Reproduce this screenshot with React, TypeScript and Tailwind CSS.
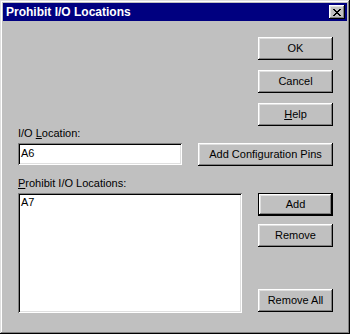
import React from 'react';

const raised =
  'bg-[#c0c0c0] shadow-[inset_-1px_-1px_#000,inset_1px_1px_#fff,inset_-2px_-2px_#808080,inset_2px_2px_#dfdfdf]';
const sunken =
  'bg-white shadow-[inset_1px_1px_#808080,inset_-1px_-1px_#fff,inset_2px_2px_#000,inset_-2px_-2px_#dfdfdf]';

function Btn({ children, isDefault, className = '' }: { children: React.ReactNode; isDefault?: boolean; className?: string }) {
  if (isDefault) {
    return (
      <div className={`w-[75px] h-[23px] border border-black ${className}`}>
        <div className={`w-full h-full flex items-center justify-center ${raised}`}>{children}</div>
      </div>
    );
  }
  return (
    <div className={`w-[75px] h-[23px] flex items-center justify-center ${raised} ${className}`}>{children}</div>
  );
}

export default function App() {
  return (
    <div
      className="w-[350px] h-[334px] bg-[#c0c0c0] p-[3px] flex flex-col text-[11px] leading-[13px] text-black shadow-[inset_-1px_-1px_#000,inset_1px_1px_#dfdfdf,inset_-2px_-2px_#808080,inset_2px_2px_#fff]"
      style={{ fontFamily: '"Liberation Sans", Arial, sans-serif' }}
    >
      {/* title bar */}
      <div className="h-[18px] bg-[#000080] flex items-center justify-between pl-[3px] pr-[2px]">
        <span className="text-white font-bold text-[12px]">Prohibit I/O Locations</span>
        <div className={`w-[16px] h-[14px] flex items-center justify-center ${raised}`}>
          <svg width="8" height="7" viewBox="0 0 8 7" shapeRendering="crispEdges">
            <path d="M0 0h2v1h-2zM6 0h2v1h-2zM1 1h2v1h-2zM5 1h2v1h-2zM2 2h4v1h-4zM3 3h2v1h-2zM2 4h4v1h-4zM1 5h2v1h-2zM5 5h2v1h-2zM0 6h2v1h-2zM6 6h2v1h-2z" fill="#000" />
          </svg>
        </div>
      </div>

      <div className="flex flex-col pl-[15px] pr-[14px] pt-[16px]">
        {/* top buttons */}
        <div className="flex flex-col items-end gap-[10px]">
          <Btn>OK</Btn>
          <Btn>Cancel</Btn>
          <Btn>
            <span>
              <u>H</u>elp
            </span>
          </Btn>
        </div>

        <div className="mt-[1px] h-[13px]">
          I/O <u>L</u>ocation:
        </div>
        <div className="mt-[3px] flex items-start justify-between">
          <div className={`w-[164px] h-[22px] pl-[3px] pt-[4px] ${sunken}`}>A6</div>
          <div className={`w-[135px] h-[23px] flex items-center justify-center ${raised}`}>Add Configuration Pins</div>
        </div>

        <div className="mt-[11px] h-[13px]">
          <u>P</u>rohibit I/O Locations:
        </div>
        <div className="mt-[3px] flex items-start justify-between">
          <div className={`w-[224px] h-[120px] pl-[3px] pt-[3px] ${sunken}`}>A7</div>
          <div className="flex flex-col">
            <Btn isDefault>Add</Btn>
            <Btn className="mt-[8px]">Remove</Btn>
            <Btn className="mt-[42px]">Remove All</Btn>
          </div>
        </div>
      </div>
    </div>
  );
}
